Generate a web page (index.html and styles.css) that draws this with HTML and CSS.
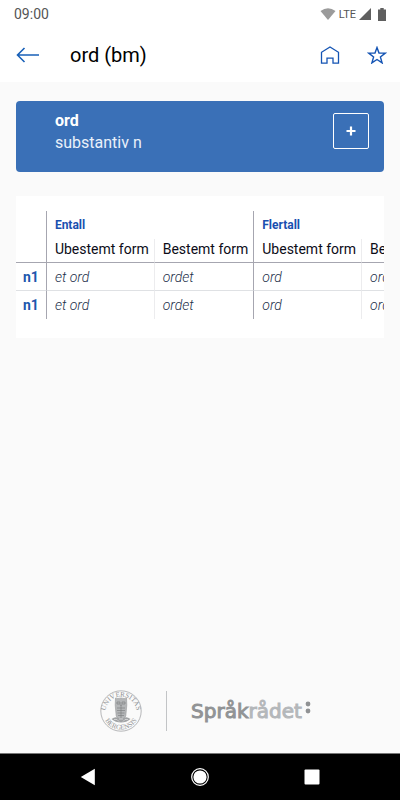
FILE: index.html
```html
<!DOCTYPE html>
<html lang="nb">
<head>
<meta charset="utf-8">
<meta name="viewport" content="width=device-width, initial-scale=1">
<title>ord (bm)</title>
<link rel="stylesheet" href="styles.css">
</head>
<body>
<div class="status">
  <span class="clock">09:00</span>
  <div class="signals">
    <svg width="16" height="12" viewBox="0 0 16 12"><path d="M0.5 3Q8-2.6 15.500 3L8 12Z" fill="#9b9b9b"/></svg>
    <span class="network">LTE</span>
    <svg width="12" height="12" viewBox="0 0 12 12"><path d="M12 0V12H0Z" fill="#5f5f5f"/></svg>
    <svg class="battery" width="8" height="13" viewBox="0 0 8 13"><path d="M2.300 0h3.400v1.500H8V13H0V1.500h2.300Z" fill="#5f5f5f"/></svg>
  </div>
</div>
<header class="bar">
  <button class="icon-button" aria-label="Tilbake">
    <svg width="24" height="16" viewBox="0 0 24 16"><path d="M23 8H1.500M8.500 1L1.500 8l7 7" fill="none" stroke="#1860b8" stroke-width="1.600"/></svg>
  </button>
  <h1 class="title">ord (bm)</h1>
  <button class="icon-button" aria-label="Hjem">
    <svg width="20" height="18" viewBox="0 0 20 18"><path d="M1.500 17.200V6.300L10 .9l8.500 5.400v10.900H13v-5H7v5Z" fill="none" stroke="#1454b4" stroke-width="1.300"/></svg>
  </button>
  <button class="icon-button star" aria-label="Favoritt">
    <svg width="20" height="18" viewBox="0 0 20 18"><path d="M10 1.500l2 5.500 6.300.1-4.900 3.800 1.700 6-5.100-3.400-5.100 3.400 1.700-6L1.700 7.100 8 7Z" fill="none" stroke="#1454b4" stroke-width="1.400"/></svg>
  </button>
</header>
<main class="content">
  <section class="word">
    <div>
      <h2 class="lemma">ord</h2>
      <p class="class">substantiv n</p>
    </div>
    <button class="add" aria-label="Vis mer">
      <svg width="10" height="10" viewBox="0 0 10 10"><path d="M5 .5v9M.5 5h9" stroke="#fff" stroke-width="2.200"/></svg>
    </button>
  </section>
  <section class="panel">
    <table class="forms">
      <thead>
        <tr class="groups"><td></td><th class="edge-start" colspan="2">Entall</th><th class="edge-start" colspan="2">Flertall</th></tr>
        <tr class="heads"><td></td><th class="edge-start">Ubestemt form</th><th>Bestemt form</th><th class="edge-start">Ubestemt form</th><th>Bestemt form</th></tr>
      </thead>
      <tbody>
        <tr><th>n1</th><td class="edge-start">et ord</td><td>ordet</td><td class="edge-start">ord</td><td>orda</td></tr>
        <tr><th>n1</th><td class="edge-start">et ord</td><td>ordet</td><td class="edge-start">ord</td><td>ordene</td></tr>
      </tbody>
    </table>
  </section>
</main>
<footer class="owners">
  <svg width="42" height="42" viewBox="0 0 42 42" role="img" aria-label="Universitas Bergensis">
    <defs>
      <path id="arc-top" d="M6.300 27A15.500 15.500 0 1 1 35.700 27"/>
      <path id="arc-bottom" d="M2.500 21A18.500 18.500 0 0 0 39.500 21"/>
    </defs>
    <circle cx="21" cy="21" r="20.200" fill="none" stroke="#a4a6a8" stroke-width=".8"/>
    <text class="seal-text"><textPath href="#arc-top" startOffset="50%" text-anchor="middle">UNIVERSITAS</textPath></text>
    <text class="seal-text"><textPath href="#arc-bottom" startOffset="50%" text-anchor="middle">BERGENSIS</textPath></text>
    <path d="M15.500 8q2 1 5.500 0 3.500 1 5.500 0l.3 7-1 11-2 3h-5.600l-2-3-1-11Z" fill="#b4b6b8" stroke="#97999b" stroke-width=".6"/>
    <path d="M17 12h3v2h-3zM22 12h3v2h-3zM20.500 14.500l.5 2 .5-2M17 18h8M17 20.500h8M17.500 23h7M18 25.500h6M21 17v11" fill="none" stroke="#7f8183" stroke-width=".7"/>
    <path d="M11.500 29q4-3 7-1l2.500 1 2.500-1q3-2 7 1-4 3.500-9.500 3.500T11.500 29Z" fill="#a1a3a5"/>
    <path d="M14 29.500h3l2 2M28 29.500h-3l-2 2M19 29h4" fill="none" stroke="#eee" stroke-width=".6"/>
  </svg>
  <div class="divider"></div>
  <div class="brand"><span class="brand-dark">Språk</span><span class="brand-light">rådet</span><svg class="brand-dots" width="6" height="13" viewBox="0 0 6 13"><circle cx="3" cy="3" r="2.400" fill="#909294"/><circle cx="3" cy="10" r="2.400" fill="#909294"/></svg></div>
</footer>
<nav class="system">
  <button class="system-button" aria-label="Tilbake"><svg width="16" height="18" viewBox="0 0 16 18"><path d="M.8 9L14.800.800v16.400Z" fill="#fff"/></svg></button>
  <button class="system-button" aria-label="Hjem"><svg width="18" height="18" viewBox="0 0 18 18"><circle cx="9" cy="9" r="8.300" fill="none" stroke="#fff" stroke-width="1.200"/><circle cx="9" cy="9" r="6.600" fill="#fff"/></svg></button>
  <button class="system-button" aria-label="Oversikt"><svg width="16" height="16" viewBox="0 0 16 16"><rect x=".5" y=".5" width="15" height="15" rx="1" fill="#fff"/></svg></button>
</nav>
</body>
</html>
```

FILE: styles.css
```css
* { box-sizing: border-box; }

body {
  margin: 0;
  min-height: 100vh;
  display: flex;
  flex-direction: column;
  background: #fafafa;
  color: #0c0c18;
  font-family: Roboto, "Liberation Sans", sans-serif;
  font-size: 14px;
}

h1, h2, p { margin: 0; }
svg { display: block; flex: none; }
button { border: 0; padding: 0; background: none; font: inherit; }

.status {
  display: flex;
  justify-content: space-between;
  align-items: center;
  height: 28px;
  padding: 0 14px;
  background: #fff;
  color: #555;
}
.signals { display: flex; align-items: center; gap: 3px; }
.network { font-size: 11px; }
.battery { margin-left: 4px; }

.bar {
  display: flex;
  align-items: center;
  height: 54px;
  padding: 0 13px 0 16px;
  background: #fff;
}
.icon-button { display: flex; }
.star { margin-left: 27px; }
.title {
  flex: 1;
  margin-left: 30px;
  font-size: 20px;
  font-weight: 400;
  color: #000;
}

.content {
  flex: 1;
  display: flex;
  flex-direction: column;
  gap: 24px;
  padding: 19px 16px;
}
.word {
  display: flex;
  justify-content: space-between;
  align-items: flex-start;
  min-height: 71px;
  padding: 9px 15px 0 39px;
  border-radius: 4px;
  background: #3a70b7;
  color: #fff;
}
.lemma, .class { font-size: 16px; line-height: 22px; }
.lemma { font-weight: 700; }
.class { color: #eaf1fa; }
.add {
  display: flex;
  align-items: center;
  justify-content: center;
  width: 36px;
  height: 36px;
  margin-top: 3px;
  border: 1px solid #fff;
  border-radius: 2px;
}

.panel {
  padding: 15px 0 19px;
  background: #fff;
  overflow-x: auto;
  scrollbar-width: none;
}
.forms { border-collapse: separate; border-spacing: 0; white-space: nowrap; }
.forms th, .forms td {
  height: 28px;
  padding: 0 5px 0 8px;
  text-align: left;
  line-height: 20px;
}
.forms td + td, .forms th + th { border-left: 1px solid #ececee; }
.forms .edge-start { border-left: 1px solid #a6a6b0; }
.forms .groups th { height: 27px; padding-bottom: 1px; font-size: 12px; font-weight: 700; color: #1a50b0; }
.forms .heads th, .forms .heads td {
  height: 24px;
  padding-bottom: 3px;
  border-bottom: 1px solid #a6a6b0;
  font-weight: 400;
}
.forms tbody th { padding: 0 7px; font-weight: 700; color: #1d57ad; }
.forms tbody td { font-style: italic; font-weight: 300; color: #1c2f4a; }
.forms tbody tr:first-child > * { border-bottom: 1px solid #dfe1e4; }

.owners {
  display: flex;
  align-items: center;
  justify-content: center;
  gap: 24px;
  padding: 0 0 21px 11px;
}
.seal-text { font: 7px "Liberation Serif", serif; fill: #8f9193; }
.divider { width: 1px; height: 40px; background: #c2c4c6; }
.brand { display: flex; align-items: center; font: 20px/24px "DejaVu Sans", sans-serif; -webkit-text-stroke: 1px; }
.brand-dark { color: #919395; }
.brand-light { color: #b4b7ba; }
.brand-dots { margin: 0 0 8px 3px; }

.system {
  display: flex;
  align-items: center;
  justify-content: space-between;
  height: 47px;
  padding: 0 20%;
  border-top: 1px solid #777;
  background: #000;
}
.system-button { display: flex; }
```
